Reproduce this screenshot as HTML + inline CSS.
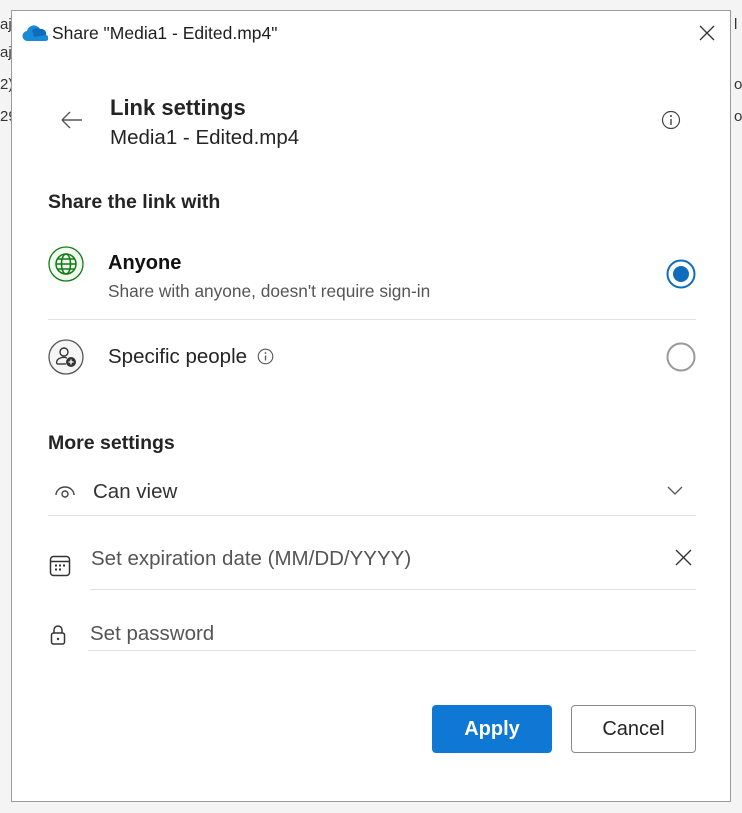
<!DOCTYPE html>
<html><head><style>
body{margin:0;width:742px;height:813px;background:#f4f4f4;position:relative;overflow:hidden;font-family:"Liberation Sans",sans-serif;color:#242424}
.abs{position:absolute}
.win{left:11px;top:10px;width:720px;height:792px;background:#fff;border:1px solid #9a9a9a;box-sizing:border-box}
.sep{height:1px;background:#e1e1e1;position:absolute}
.frag{position:absolute;font-size:15px;color:#333}
</style></head><body>
<div class="frag" style="left:0;top:16px">aji</div>
<div class="frag" style="left:0;top:44px">aji</div>
<div class="frag" style="left:0;top:76px">2)</div>
<div class="frag" style="left:0;top:108px">29</div>
<div class="frag" style="left:734px;top:16px">l</div>
<div class="frag" style="left:734px;top:76px">o</div>
<div class="frag" style="left:734px;top:108px">o</div>
<div class="abs win"></div>
<svg class="abs" style="left:22px;top:24px" width="26" height="18" viewBox="0 0 26 18"><path d="M6 17a5 5 0 0 1-1-10 7 7 0 0 1 13-2 5 5 0 0 1 6 6 3 3 0 0 1-1 6z" fill="#1a8ad8"/><path d="M10 6a7 7 0 0 1 8-1 5 5 0 0 1 6 6L12 13z" fill="#0f6cbd"/></svg>
<div class="abs" style="left:52px;top:23px;font-size:17.5px;color:#1f1f1f">Share "Media1 - Edited.mp4"</div>
<svg class="abs" style="left:699px;top:25px" width="16" height="16"><path d="M1 1L15 15M15 1L1 15" stroke="#333" stroke-width="1.3"/></svg>
<svg class="abs" style="left:60px;top:110px" width="24" height="20"><path d="M2 10H22M2 10L10 2M2 10L10 18" stroke="#555" stroke-width="1.4" fill="none"/></svg>
<div class="abs" style="left:110px;top:95px;font-size:22px;font-weight:bold">Link settings</div>
<div class="abs" style="left:110px;top:126px;font-size:20.5px">Media1 - Edited.mp4</div>
<svg class="abs" style="left:661px;top:110px" width="20" height="20"><circle cx="10" cy="10" r="8.5" stroke="#444" fill="none" stroke-width="1.2"/><path d="M10 9V15" stroke="#444" stroke-width="1.4"/><circle cx="10" cy="6" r="1" fill="#444"/></svg>
<div class="abs" style="left:48px;top:191px;font-size:19.5px;font-weight:bold">Share the link with</div>
<svg class="abs" style="left:47px;top:245px" width="38" height="38"><circle cx="19" cy="19" r="17" fill="#f1faf1" stroke="#107c10" stroke-width="1.3"/><circle cx="19" cy="19" r="10" fill="none" stroke="#107c10" stroke-width="1.5"/><ellipse cx="19" cy="19" rx="4.5" ry="10" fill="none" stroke="#107c10" stroke-width="1.5"/><path d="M9 19H29M11 14H27M11 24H27" stroke="#107c10" stroke-width="1.5"/></svg>
<div class="abs" style="left:108px;top:252px;font-size:20px;font-weight:bold;color:#111">Anyone</div>
<div class="abs" style="left:108px;top:281px;font-size:17.3px;color:#555">Share with anyone, doesn't require sign-in</div>
<svg class="abs" style="left:665px;top:258px" width="32" height="32"><circle cx="16" cy="16" r="13.5" fill="#fff" stroke="#0f6cbd" stroke-width="2"/><circle cx="16" cy="16" r="8" fill="#0f6cbd"/></svg>
<div class="sep" style="left:48px;top:319px;width:648px"></div>
<svg class="abs" style="left:47px;top:338px" width="38" height="38"><circle cx="19" cy="19" r="17" fill="#f5f5f5" stroke="#555" stroke-width="1.3"/><circle cx="17" cy="14" r="4" fill="none" stroke="#333" stroke-width="1.4"/><path d="M10 26a7 5 0 0 1 10-6" fill="none" stroke="#333" stroke-width="1.4"/><path d="M10 26h9" stroke="#333" stroke-width="1.4"/><circle cx="24" cy="24" r="5" fill="#333"/><path d="M24 21.5v5M21.5 24h5" stroke="#fff" stroke-width="1.3"/></svg>
<div class="abs" style="left:108px;top:345px;font-size:20.5px">Specific people</div>
<svg class="abs" style="left:257px;top:348px" width="17" height="17"><circle cx="8.5" cy="8.5" r="7.3" stroke="#555" fill="none" stroke-width="1.1"/><path d="M8.5 7.5V12.5" stroke="#555" stroke-width="1.3"/><circle cx="8.5" cy="5" r="0.9" fill="#555"/></svg>
<svg class="abs" style="left:665px;top:341px" width="32" height="32"><circle cx="16" cy="16" r="13.5" fill="#fff" stroke="#999" stroke-width="2"/></svg>
<div class="abs" style="left:48px;top:432px;font-size:19.5px;font-weight:bold">More settings</div>
<svg class="abs" style="left:54px;top:484px" width="22" height="16"><path d="M2 11a9 8 0 0 1 18 0" fill="none" stroke="#444" stroke-width="1.4"/><circle cx="11" cy="10" r="3" fill="none" stroke="#444" stroke-width="1.4"/></svg>
<div class="abs" style="left:93px;top:480px;font-size:20.5px;color:#333">Can view</div>
<svg class="abs" style="left:667px;top:486px" width="16" height="10"><path d="M1 1L8 8L15 1" fill="none" stroke="#555" stroke-width="1.3"/></svg>
<div class="sep" style="left:48px;top:515px;width:648px"></div>
<svg class="abs" style="left:49px;top:555px" width="22" height="22"><rect x="1.5" y="1.5" width="19" height="19" rx="3" fill="none" stroke="#333" stroke-width="1.5"/><path d="M1.5 6.5H20.5" stroke="#333" stroke-width="1.5"/><g fill="#333"><rect x="6" y="9.5" width="2" height="2"/><rect x="10" y="9.5" width="2" height="2"/><rect x="14" y="9.5" width="2" height="2"/><rect x="6" y="13.5" width="2" height="2"/><rect x="10" y="13.5" width="2" height="2"/></g></svg>
<div class="abs" style="left:91px;top:547px;font-size:20.5px;color:#555">Set expiration date (MM/DD/YYYY)</div>
<svg class="abs" style="left:675px;top:549px" width="17" height="17"><path d="M1 1L16 16M16 1L1 16" stroke="#333" stroke-width="1.4"/></svg>
<div class="sep" style="left:90px;top:589px;width:606px"></div>
<svg class="abs" style="left:50px;top:624px" width="16" height="22"><path d="M4 9V6a4 4 0 0 1 8 0v3" fill="none" stroke="#333" stroke-width="1.5"/><rect x="1.5" y="9" width="13" height="11" rx="2" fill="none" stroke="#333" stroke-width="1.5"/><circle cx="8" cy="15" r="1.2" fill="#333"/></svg>
<div class="abs" style="left:90px;top:622px;font-size:20.5px;color:#555">Set password</div>
<div class="sep" style="left:88px;top:650px;width:608px"></div>
<div class="abs" style="left:432px;top:705px;width:120px;height:48px;background:#0f78d4;border-radius:4px;color:#fff;font-size:20px;font-weight:bold;text-align:center;line-height:48px">Apply</div>
<div class="abs" style="left:571px;top:705px;width:125px;height:48px;box-sizing:border-box;border:1px solid #8a8a8a;border-radius:4px;font-size:20px;text-align:center;line-height:46px">Cancel</div>
</body></html>
